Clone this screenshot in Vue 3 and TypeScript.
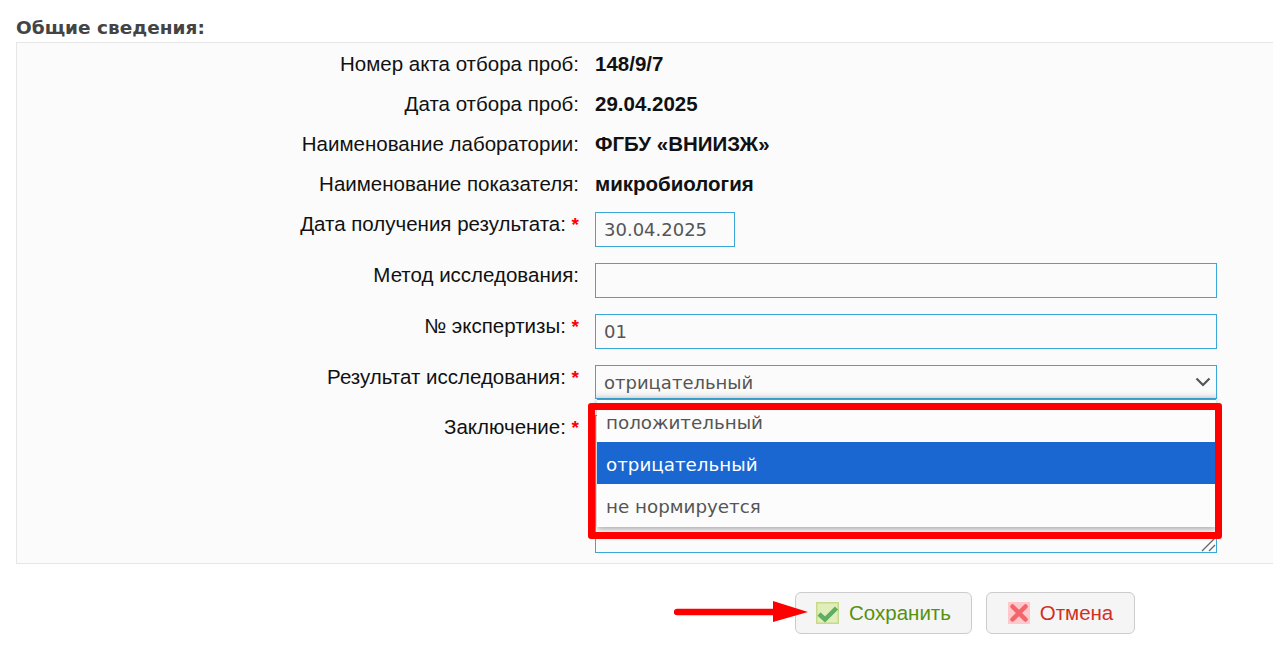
<template>
  <div class="page">
    <h3 class="legend">Общие сведения:</h3>
    <div class="box">
      <div v-for="row in infoRows" :key="row.label" class="row info-row">
        <div class="label">{{ row.label }}</div>
        <div class="value">{{ row.value }}</div>
      </div>

      <div class="row">
        <div class="label">Дата получения результата: <span class="req">*</span></div>
        <input class="field date" type="text" value="30.04.2025" />
      </div>
      <div class="row">
        <div class="label">Метод исследования:</div>
        <input class="field" type="text" value="" />
      </div>
      <div class="row">
        <div class="label">№ экспертизы: <span class="req">*</span></div>
        <input class="field" type="text" value="01" />
      </div>
      <div class="row">
        <div class="label">Результат исследования: <span class="req">*</span></div>
        <div class="select-wrap">
          <div class="field select">
            <span>отрицательный</span>
            <svg class="chevron" width="16" height="10" viewBox="0 0 16 10">
              <path d="M1.5 1.5 L8 8 L14.5 1.5" fill="none" stroke="#555" stroke-width="2.2" />
            </svg>
          </div>
          <ul class="menu">
            <li v-for="opt in options" :key="opt" :class="{ active: opt === selected }">{{ opt }}</li>
          </ul>
          <div class="highlight"></div>
        </div>
      </div>
      <div class="row last">
        <div class="label">Заключение: <span class="req">*</span></div>
        <div class="area-wrap">
          <textarea class="field area"></textarea>
          <svg class="grip" width="15" height="14" viewBox="0 0 15 14">
            <path d="M1 13 L13 1 M8 13 L14 7" fill="none" stroke="#666" stroke-width="1.3" />
          </svg>
        </div>
      </div>
    </div>

    <div class="actions">
      <button class="btn save" type="button">
        <svg class="icon" width="23" height="22" viewBox="0 0 23 22">
          <rect x="0.75" y="0.75" width="21.5" height="20.5" fill="#e2edbc" stroke="#c6da8a" stroke-width="1.5" />
          <path d="M3 12 L9 17.5 L20.5 6" fill="none" stroke="#5fae62" stroke-width="4.5" />
        </svg>
        Сохранить
      </button>
      <button class="btn cancel" type="button">
        <svg class="icon" width="22" height="22" viewBox="0 0 22 22">
          <rect width="22" height="22" fill="#ffc9cb" />
          <path d="M4.5 4.5 L17.5 17.5 M17.5 4.5 L4.5 17.5" fill="none" stroke="#f2666b" stroke-width="4.5" stroke-linecap="round" />
        </svg>
        Отмена
      </button>
      <svg class="arrow" width="136" height="24" viewBox="0 0 136 24">
        <path d="M3 13 L100 13" stroke="#f00" stroke-width="6.5" stroke-linecap="round" />
        <path d="M99 2 L134 13 L99 23 Z" fill="#f00" />
      </svg>
    </div>
  </div>
</template>

<script setup lang="ts">
const infoRows = [
  { label: 'Номер акта отбора проб:', value: '148/9/7' },
  { label: 'Дата отбора проб:', value: '29.04.2025' },
  { label: 'Наименование лаборатории:', value: 'ФГБУ «ВНИИЗЖ»' },
  { label: 'Наименование показателя:', value: 'микробиология' }
]

const options = ['положительный', 'отрицательный', 'не нормируется']
const selected = 'отрицательный'
</script>

<style>
html,
body {
  margin: 0;
  background: #fff;
  overflow: hidden;
}
</style>

<style scoped>
.page {
  position: relative;
  height: 650px;
  padding: 16px 0 0 16px;
  box-sizing: border-box;
  font-family: "Liberation Sans", Arial, sans-serif;
  font-size: 20.5px;
  color: #111;
}

.legend {
  margin: 0;
  height: 26px;
  line-height: 23px;
  font-family: "DejaVu Sans", Verdana, sans-serif;
  font-size: 18.5px;
  font-weight: bold;
  color: #444;
}

.box {
  height: 522px;
  box-sizing: border-box;
  padding-top: 1px;
  background: #fbfbfb;
  border: 1px solid #e6e6e6;
  border-right: none;
}

.row {
  display: grid;
  grid-template-columns: 562px 622px;
  column-gap: 16px;
  margin-bottom: 16px;
}

.info-row {
  height: 40px;
  margin-bottom: 0;
  align-items: center;
}

.info-row:nth-child(4) {
  margin-bottom: 8px;
}

.label {
  text-align: right;
  line-height: 24px;
}

.req {
  color: #f00;
  font-size: 19px;
  font-weight: bold;
}

.value {
  font-weight: bold;
}

.field {
  box-sizing: border-box;
  width: 622px;
  height: 35px;
  margin: 0;
  padding: 0 8px;
  border: 1px solid #3aa7d9;
  border-radius: 0;
  outline: none;
  background: #fbfbfb;
  font-family: "DejaVu Sans", Verdana, sans-serif;
  font-size: 18px;
  color: #555;
}

.date {
  width: 140px;
}

.select-wrap {
  position: relative;
}

.select {
  display: flex;
  align-items: center;
  justify-content: space-between;
  height: 34px;
  padding-right: 5px;
  box-shadow: inset 0 -8px 8px -8px rgba(0, 0, 0, 0.2);
}

.menu {
  position: absolute;
  z-index: 2;
  top: 34px;
  left: 2px;
  width: 619px;
  margin: 0;
  padding: 0 0 1px;
  box-sizing: border-box;
  list-style: none;
  background: #fcfcfc;
  border-top: 1px solid #888;
  box-shadow: 0 2px 6px rgba(0, 0, 0, 0.35);
  font-family: "DejaVu Sans", Verdana, sans-serif;
  font-size: 18.3px;
  color: #555;
}

.menu li {
  height: 42px;
  line-height: 45px;
  padding-left: 9px;
}

.menu li.active {
  background: #1a67d2;
  color: #fff;
}

.highlight {
  position: absolute;
  z-index: 3;
  top: 38px;
  left: -7px;
  width: 634px;
  height: 136px;
  box-sizing: border-box;
  border: 7px solid #f00;
  border-radius: 3px;
}

.area-wrap {
  position: relative;
}

.area {
  display: block;
  height: 138px;
  resize: none;
}

.grip {
  position: absolute;
  right: 1px;
  bottom: 1px;
}

.row.last {
  margin-bottom: 0;
}

.actions {
  position: relative;
  display: flex;
  gap: 14px;
  margin: 28px 0 0 779px;
}

.btn {
  display: flex;
  align-items: center;
  justify-content: center;
  gap: 10px;
  height: 42px;
  padding: 0;
  border: 1px solid #ccc;
  border-radius: 6px;
  background: #f5f5f5;
  font-family: "Liberation Sans", Arial, sans-serif;
  font-size: 20.5px;
}

.save {
  width: 177px;
  color: #55920f;
}

.cancel {
  width: 149px;
  color: #d1301f;
}

.arrow {
  position: absolute;
  top: 7px;
  left: -121px;
}
</style>
